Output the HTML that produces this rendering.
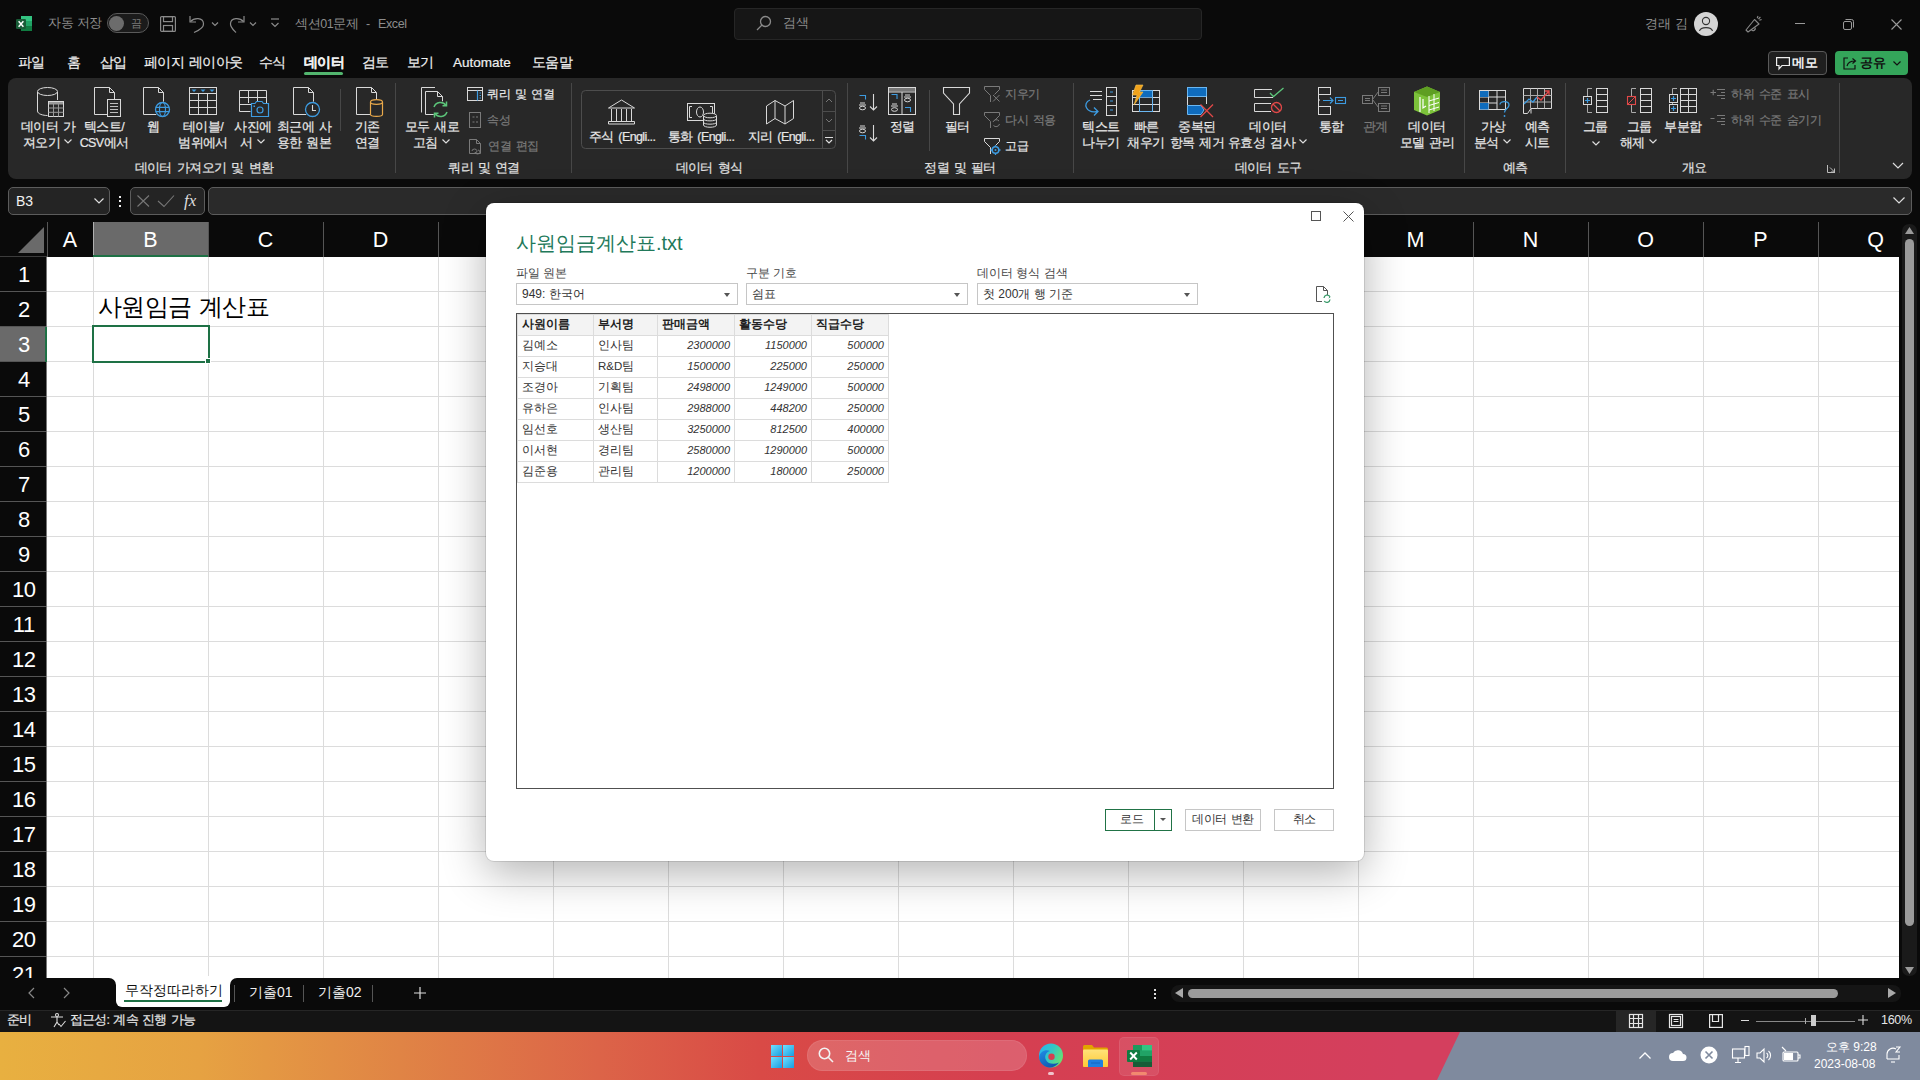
<!DOCTYPE html><html><head><meta charset="utf-8"><style>
*{margin:0;padding:0;box-sizing:border-box}
html,body{width:1920px;height:1080px;overflow:hidden;background:#0a0a0a;font-family:"Liberation Sans",sans-serif;color:#fff}
.a{position:absolute}
.t{position:absolute;white-space:nowrap;line-height:1}
svg{position:absolute;overflow:visible}
#ribbon{left:8px;top:78px;width:1904px;height:101px;background:#282828;border-radius:8px}
.rl{position:absolute;font-size:12px;letter-spacing:-0.6px;word-spacing:2px;-webkit-text-stroke:0.2px currentColor;color:#e8e8e8;text-align:center;line-height:16px;white-space:nowrap}
.gl{position:absolute;top:161px;font-size:12.5px;color:#e0e0e0;white-space:nowrap;line-height:14px}
.sep{position:absolute;width:1px;background:#474747}
.menu{position:absolute;top:55px;font-size:13.5px;letter-spacing:-0.7px;word-spacing:2px;-webkit-text-stroke:0.2px currentColor;color:#efefef;white-space:nowrap;line-height:16px}
.ch{position:absolute;top:222px;height:35px;font-size:21.5px;color:#fff;text-align:center;line-height:36px}
.rh{position:absolute;left:0;width:47px;height:35px;font-size:22px;letter-spacing:-0.5px;text-indent:0.5px;color:#fff;text-align:center;line-height:36px}
#dlg{left:486px;top:203px;width:878px;height:658px;background:#fff;border-radius:8px;box-shadow:0 12px 44px rgba(0,0,0,0.30),0 0 0 1px rgba(0,0,0,0.10)}
.dl{position:absolute;font-size:12px;color:#444;white-space:nowrap;line-height:14px}
.dd{position:absolute;top:80px;height:22px;border:1px solid #c6c6c6;background:#fff;font-size:12px;color:#333;line-height:20px;padding-left:5px;white-space:nowrap}
.dd:after{content:"";position:absolute;right:7px;top:9px;border-left:3.5px solid transparent;border-right:3.5px solid transparent;border-top:4px solid #555}
table.pv{position:absolute;left:30px;top:110px;border-collapse:collapse;font-size:11.5px;color:#333;table-layout:fixed}
table.pv td{border:1px solid #dcdcdc;height:21px;padding:0 4px 2px 4px;white-space:nowrap;line-height:17px;overflow:hidden}
table.pv tr.h td{background:#f3f3f3;font-weight:bold;color:#222;font-size:12px}
table.pv td.n{text-align:right;font-style:italic;font-size:11px}
.btn{position:absolute;top:606px;height:22px;border:1px solid #c6c6c6;font-size:12px;letter-spacing:-0.5px;word-spacing:1px;color:#333;text-align:center;line-height:18px;white-space:nowrap}
.sm{position:absolute;font-size:12px;letter-spacing:-0.5px;word-spacing:2px;-webkit-text-stroke:0.2px currentColor;white-space:nowrap;line-height:14px}
</style></head><body>
<div class="a" style="left:0;top:0;width:1920px;height:78px;background:#0a0a0a"></div>
<svg style="left:16px;top:15px" width="17" height="17" viewBox="0 0 17 17">
<rect x="5" y="1" width="11" height="15" rx="1" fill="#21a366"/>
<rect x="5" y="1" width="11" height="5" fill="#33c481"/>
<rect x="5" y="11" width="11" height="5" fill="#107c41"/>
<rect x="0" y="4" width="10" height="10" rx="1.2" fill="#185c37"/>
<path d="M2.6 6.3 L7.4 11.7 M7.4 6.3 L2.6 11.7" stroke="#fff" stroke-width="1.5"/>
</svg>
<div class="t" style="left:48px;top:17px;font-size:12.5px;letter-spacing:-0.3px;color:#8d8d8d">자동 저장</div>
<div class="a" style="left:107px;top:13px;width:42px;height:20px;border:1px solid #5a5a5a;border-radius:10px;background:#1b1b1b"></div>
<div class="a" style="left:108.5px;top:15.5px;width:15px;height:15px;border-radius:8px;background:#6c6c6c"></div>
<div class="t" style="left:131px;top:18px;font-size:11px;color:#7a7a7a">끔</div>
<svg style="left:160px;top:16px" width="16" height="16" viewBox="0 0 16 16" fill="none" stroke="#8a8a8a" stroke-width="1.2">
<rect x="0.6" y="0.6" width="14.8" height="14.8" rx="1"/><rect x="3.5" y="0.6" width="9" height="5"/><rect x="3.5" y="9.5" width="9" height="5.9"/></svg>
<svg style="left:189px;top:15px" width="32" height="18" viewBox="0 0 32 18" fill="none" stroke="#8a8a8a" stroke-width="1.2">
<path d="M1 1 V7 H7"/><path d="M1.5 6.5 C5 2.5 14 2 14.5 8.5 C15 12 12 14.5 5 17.5"/><path d="M23 7.5 l3 3 l3 -3"/></svg>
<svg style="left:229px;top:15px" width="32" height="18" viewBox="0 0 32 18" fill="none" stroke="#8a8a8a" stroke-width="1.2">
<path d="M15 1 V7 H9"/><path d="M14.5 6.5 C11 2.5 2 2 1.5 8.5 C1 12 4 14.5 7 17.5"/><path d="M21 7.5 l3 3 l3 -3"/></svg>
<svg style="left:270px;top:18px" width="10" height="12" viewBox="0 0 10 12" fill="none" stroke="#8a8a8a" stroke-width="1.2">
<path d="M1 1 H9"/><path d="M1.5 5 l3.5 3.5 l3.5 -3.5"/></svg>
<div class="t" style="left:295px;top:18px;font-size:12.5px;letter-spacing:-0.4px;color:#8d8d8d">섹션01문제</div><div class="t" style="left:366px;top:18px;font-size:12.5px;color:#8d8d8d">-</div><div class="t" style="left:378px;top:18px;font-size:12.5px;letter-spacing:-0.4px;color:#8d8d8d">Excel</div>
<div class="a" style="left:734px;top:8px;width:468px;height:32px;border:1px solid #262626;border-radius:4px;background:#161616"></div>
<svg style="left:756px;top:15px" width="16" height="16" viewBox="0 0 16 16" fill="none" stroke="#8a8a8a" stroke-width="1.3">
<circle cx="9.5" cy="6.5" r="5"/><path d="M6 10 L1 15"/></svg>
<div class="t" style="left:783px;top:16px;font-size:13px;color:#8d8d8d">검색</div>
<div class="t" style="left:1645px;top:17px;font-size:13px;letter-spacing:-0.4px;word-spacing:2px;color:#8d8d8d">경래 김</div>
<svg style="left:1694px;top:12px" width="24" height="24" viewBox="0 0 24 24"><circle cx="12" cy="12" r="12" fill="#d4d4d4"/>
<circle cx="12" cy="9" r="3.6" fill="none" stroke="#333" stroke-width="1.1"/><path d="M5.5 19 C6.5 14.5 17.5 14.5 18.5 19" fill="none" stroke="#333" stroke-width="1.1"/></svg>
<svg style="left:1745px;top:15px" width="18" height="18" viewBox="0 0 18 18" fill="none" stroke="#8a8a8a" stroke-width="1.1" stroke-linejoin="round">
<path d="M1 15 L9.5 4.5 L14 9 L3 17 Z"/><path d="M6.5 14.8 a2 2 0 0 0 3.3 -2.3"/><path d="M12.2 3.2 L13 1 M14.3 5.2 L16.6 4.4 M13.4 4 L15.4 2"/></svg>
<div class="a" style="left:1795px;top:23px;width:10px;height:1px;background:#9a9a9a"></div>
<svg style="left:1843px;top:19px" width="11" height="11" viewBox="0 0 11 11" fill="none" stroke="#9a9a9a" stroke-width="1">
<rect x="0.5" y="2.5" width="8" height="8" rx="1.5"/><path d="M2.5 0.5 H8.5 a2 2 0 0 1 2 2 V8.5"/></svg>
<svg style="left:1891px;top:19px" width="11" height="11" viewBox="0 0 11 11" fill="none" stroke="#9a9a9a" stroke-width="1.1">
<path d="M0.5 0.5 L10.5 10.5 M10.5 0.5 L0.5 10.5"/></svg>
<div class="menu" style="left:18px;font-weight:normal">파일</div>
<div class="menu" style="left:67px;font-weight:normal">홈</div>
<div class="menu" style="left:100px;font-weight:normal">삽입</div>
<div class="menu" style="left:144px;font-weight:normal">페이지 레이아웃</div>
<div class="menu" style="left:259px;font-weight:normal">수식</div>
<div class="menu" style="left:304px;font-weight:bold">데이터</div>
<div class="menu" style="left:362px;font-weight:normal">검토</div>
<div class="menu" style="left:407px;font-weight:normal">보기</div>
<div class="menu" style="left:453px;font-weight:normal;letter-spacing:0">Automate</div>
<div class="menu" style="left:532px;font-weight:normal">도움말</div>
<div class="a" style="left:304px;top:72px;width:39px;height:3px;border-radius:2px;background:#52b56e"></div>
<div class="a" style="left:1768px;top:51px;width:59px;height:24px;border:1px solid #5a5a5a;border-radius:4px;background:#1f1f1f"></div>
<svg style="left:1776px;top:57px" width="14" height="13" viewBox="0 0 14 13" fill="none" stroke="#eee" stroke-width="1.2">
<path d="M0.6 0.6 H13.4 V8.5 H6 L3 12 V8.5 H0.6 Z"/></svg>
<div class="t" style="left:1792px;top:56px;font-size:13px;color:#f0f0f0;font-weight:bold">메모</div>
<div class="a" style="left:1835px;top:51px;width:73px;height:24px;border-radius:4px;background:#34a55a"></div>
<svg style="left:1843px;top:57px" width="14" height="13" viewBox="0 0 14 13" fill="none" stroke="#111" stroke-width="1.2">
<path d="M5 1 H1 V12 H12 V8"/><path d="M4 9 C5 5 8 4 12 4 M9.5 1.5 L12.5 4 L9.5 6.5"/></svg>
<div class="t" style="left:1860px;top:56px;font-size:13px;color:#111;font-weight:bold">공유</div>
<svg style="left:1893px;top:61px" width="8" height="5" viewBox="0 0 8 5" fill="none" stroke="#111" stroke-width="1.2"><path d="M0.5 0.5 l3.5 3.5 l3.5 -3.5"/></svg>
<div id="ribbon" class="a"></div>
<div class="rl" style="left:-52px;top:119px;width:200px;color:#e8e8e8;font-size:12.5px;font-weight:normal">데이터 가</div>
<div class="rl" style="left:-52px;top:135px;width:200px;color:#e8e8e8;font-size:12.5px;font-weight:normal">져오기<span style="display:inline-block;width:10px;height:8px;position:relative;margin-left:3px"><svg style="left:1px;top:0" width="8" height="5" viewBox="0 0 8 5" fill="none" stroke="#ddd" stroke-width="1.2"><path d="M0.5 0.5 l3.5 3.5 l3.5 -3.5"/></svg></span></div>
<div class="rl" style="left:4px;top:119px;width:200px;color:#e8e8e8;font-size:12.5px;font-weight:normal">텍스트/</div>
<div class="rl" style="left:4px;top:135px;width:200px;color:#e8e8e8;font-size:12.5px;font-weight:normal">CSV에서</div>
<div class="rl" style="left:53px;top:119px;width:200px;color:#e8e8e8;font-size:12.5px;font-weight:normal">웹</div>
<div class="rl" style="left:103px;top:119px;width:200px;color:#e8e8e8;font-size:12.5px;font-weight:normal">테이블/</div>
<div class="rl" style="left:103px;top:135px;width:200px;color:#e8e8e8;font-size:12.5px;font-weight:normal">범위에서</div>
<div class="rl" style="left:153px;top:119px;width:200px;color:#e8e8e8;font-size:12.5px;font-weight:normal">사진에</div>
<div class="rl" style="left:153px;top:135px;width:200px;color:#e8e8e8;font-size:12.5px;font-weight:normal">서<span style="display:inline-block;width:10px;height:8px;position:relative;margin-left:3px"><svg style="left:1px;top:0" width="8" height="5" viewBox="0 0 8 5" fill="none" stroke="#ddd" stroke-width="1.2"><path d="M0.5 0.5 l3.5 3.5 l3.5 -3.5"/></svg></span></div>
<div class="rl" style="left:204px;top:119px;width:200px;color:#e8e8e8;font-size:12.5px;font-weight:normal">최근에 사</div>
<div class="rl" style="left:204px;top:135px;width:200px;color:#e8e8e8;font-size:12.5px;font-weight:normal">용한 원본</div>
<div class="rl" style="left:267px;top:119px;width:200px;color:#e8e8e8;font-size:12.5px;font-weight:normal">기존</div>
<div class="rl" style="left:267px;top:135px;width:200px;color:#e8e8e8;font-size:12.5px;font-weight:normal">연결</div>
<div class="rl" style="left:332px;top:119px;width:200px;color:#e8e8e8;font-size:12.5px;font-weight:normal">모두 새로</div>
<div class="rl" style="left:332px;top:135px;width:200px;color:#e8e8e8;font-size:12.5px;font-weight:normal">고침<span style="display:inline-block;width:10px;height:8px;position:relative;margin-left:3px"><svg style="left:1px;top:0" width="8" height="5" viewBox="0 0 8 5" fill="none" stroke="#ddd" stroke-width="1.2"><path d="M0.5 0.5 l3.5 3.5 l3.5 -3.5"/></svg></span></div>
<div class="sm" style="left:487px;top:87px;color:#e8e8e8">쿼리 및 연결</div>
<div class="sm" style="left:487px;top:113px;color:#7a7a7a">속성</div>
<div class="sm" style="left:488px;top:139px;color:#7a7a7a">연결 편집</div>
<div class="rl" style="left:522px;top:129px;width:200px;color:#e8e8e8;font-size:12.5px;font-weight:normal">주식 (Engli...</div>
<div class="rl" style="left:601px;top:129px;width:200px;color:#e8e8e8;font-size:12.5px;font-weight:normal">통화 (Engli...</div>
<div class="rl" style="left:681px;top:129px;width:200px;color:#e8e8e8;font-size:12.5px;font-weight:normal">지리 (Engli...</div>
<div class="rl" style="left:802px;top:119px;width:200px;color:#e8e8e8;font-size:12.5px;font-weight:normal">정렬</div>
<div class="rl" style="left:857px;top:119px;width:200px;color:#e8e8e8;font-size:12.5px;font-weight:normal">필터</div>
<div class="sm" style="left:1005px;top:87px;color:#7a7a7a">지우기</div>
<div class="sm" style="left:1005px;top:113px;color:#7a7a7a">다시 적용</div>
<div class="sm" style="left:1005px;top:139px;color:#e8e8e8">고급</div>
<div class="rl" style="left:1001px;top:119px;width:200px;color:#e8e8e8;font-size:12.5px;font-weight:normal">텍스트</div>
<div class="rl" style="left:1001px;top:135px;width:200px;color:#e8e8e8;font-size:12.5px;font-weight:normal">나누기</div>
<div class="rl" style="left:1046px;top:119px;width:200px;color:#e8e8e8;font-size:12.5px;font-weight:normal">빠른</div>
<div class="rl" style="left:1046px;top:135px;width:200px;color:#e8e8e8;font-size:12.5px;font-weight:normal">채우기</div>
<div class="rl" style="left:1097px;top:119px;width:200px;color:#e8e8e8;font-size:12.5px;font-weight:normal">중복된</div>
<div class="rl" style="left:1097px;top:135px;width:200px;color:#e8e8e8;font-size:12.5px;font-weight:normal">항목 제거</div>
<div class="rl" style="left:1168px;top:119px;width:200px;color:#e8e8e8;font-size:12.5px;font-weight:normal">데이터</div>
<div class="rl" style="left:1168px;top:135px;width:200px;color:#e8e8e8;font-size:12.5px;font-weight:normal">유효성 검사<span style="display:inline-block;width:10px;height:8px;position:relative;margin-left:3px"><svg style="left:1px;top:0" width="8" height="5" viewBox="0 0 8 5" fill="none" stroke="#ddd" stroke-width="1.2"><path d="M0.5 0.5 l3.5 3.5 l3.5 -3.5"/></svg></span></div>
<div class="rl" style="left:1231px;top:119px;width:200px;color:#e8e8e8;font-size:12.5px;font-weight:normal">통합</div>
<div class="rl" style="left:1275px;top:119px;width:200px;color:#7a7a7a;font-size:12.5px;font-weight:normal">관계</div>
<div class="rl" style="left:1327px;top:119px;width:200px;color:#e8e8e8;font-size:12.5px;font-weight:normal">데이터</div>
<div class="rl" style="left:1327px;top:135px;width:200px;color:#e8e8e8;font-size:12.5px;font-weight:normal">모델 관리</div>
<div class="rl" style="left:1393px;top:119px;width:200px;color:#e8e8e8;font-size:12.5px;font-weight:normal">가상</div>
<div class="rl" style="left:1393px;top:135px;width:200px;color:#e8e8e8;font-size:12.5px;font-weight:normal">분석<span style="display:inline-block;width:10px;height:8px;position:relative;margin-left:3px"><svg style="left:1px;top:0" width="8" height="5" viewBox="0 0 8 5" fill="none" stroke="#ddd" stroke-width="1.2"><path d="M0.5 0.5 l3.5 3.5 l3.5 -3.5"/></svg></span></div>
<div class="rl" style="left:1437px;top:119px;width:200px;color:#e8e8e8;font-size:12.5px;font-weight:normal">예측</div>
<div class="rl" style="left:1437px;top:135px;width:200px;color:#e8e8e8;font-size:12.5px;font-weight:normal">시트</div>
<div class="rl" style="left:1495px;top:119px;width:200px;color:#e8e8e8;font-size:12.5px;font-weight:normal">그룹</div>
<svg style="left:1592px;top:141px" width="8" height="5" viewBox="0 0 8 5" fill="none" stroke="#ddd" stroke-width="1.2"><path d="M0.5 0.5 l3.5 3.5 l3.5 -3.5"/></svg>
<div class="rl" style="left:1539px;top:119px;width:200px;color:#e8e8e8;font-size:12.5px;font-weight:normal">그룹</div>
<div class="rl" style="left:1539px;top:135px;width:200px;color:#e8e8e8;font-size:12.5px;font-weight:normal">해제<span style="display:inline-block;width:10px;height:8px;position:relative;margin-left:3px"><svg style="left:1px;top:0" width="8" height="5" viewBox="0 0 8 5" fill="none" stroke="#ddd" stroke-width="1.2"><path d="M0.5 0.5 l3.5 3.5 l3.5 -3.5"/></svg></span></div>
<div class="rl" style="left:1583px;top:119px;width:200px;color:#e8e8e8;font-size:12.5px;font-weight:normal">부분합</div>
<div class="sm" style="left:1731px;top:87px;color:#7a7a7a">하위 수준 표시</div>
<div class="sm" style="left:1731px;top:113px;color:#7a7a7a">하위 수준 숨기기</div>
<div class="rl" style="left:104px;top:160px;width:200px;color:#e0e0e0;font-size:12.5px;font-weight:normal">데이터 가져오기 및 변환</div>
<div class="rl" style="left:384px;top:160px;width:200px;color:#e0e0e0;font-size:12.5px;font-weight:normal">쿼리 및 연결</div>
<div class="rl" style="left:609px;top:160px;width:200px;color:#e0e0e0;font-size:12.5px;font-weight:normal">데이터 형식</div>
<div class="rl" style="left:860px;top:160px;width:200px;color:#e0e0e0;font-size:12.5px;font-weight:normal">정렬 및 필터</div>
<div class="rl" style="left:1168px;top:160px;width:200px;color:#e0e0e0;font-size:12.5px;font-weight:normal">데이터 도구</div>
<div class="rl" style="left:1415px;top:160px;width:200px;color:#e0e0e0;font-size:12.5px;font-weight:normal">예측</div>
<div class="rl" style="left:1594px;top:160px;width:200px;color:#e0e0e0;font-size:12.5px;font-weight:normal">개요</div>
<div class="sep" style="left:340px;top:89px;height:42px"></div>
<div class="sep" style="left:395px;top:83px;height:90px"></div>
<div class="sep" style="left:571px;top:83px;height:90px"></div>
<div class="sep" style="left:847px;top:83px;height:90px"></div>
<div class="sep" style="left:929px;top:90px;height:61px"></div>
<div class="sep" style="left:1073px;top:83px;height:90px"></div>
<div class="sep" style="left:1464px;top:83px;height:90px"></div>
<div class="sep" style="left:1565px;top:83px;height:90px"></div>
<div class="sep" style="left:1839px;top:83px;height:90px"></div>
<svg style="left:0;top:0" width="1920" height="180" viewBox="0 0 1920 180"><path d="M37.5 92 V111 C37.5 114 43 115.5 47.5 115.5" fill="none" stroke="#d9d9d9"/><ellipse cx="47.5" cy="91.5" rx="10" ry="4" fill="none" stroke="#d9d9d9"/><path d="M57.5 92 V100" fill="none" stroke="#d9d9d9"/><rect x="48.5" y="101.5" width="15" height="15" fill="#282828" stroke="#d9d9d9"/><rect x="49" y="102" width="14" height="2.5" fill="#9a9a9a"/><path d="M48.5 108 H63.5 M48.5 112.3 H63.5 M53.5 104 V116.5 M58.5 104 V116.5" stroke="#9a9a9a"/><path d="M94.5 87.5 H109.5 L114.5 92.5 V114.5 H94.5 Z" fill="none" stroke="#d9d9d9"/><path d="M109.5 87.5 V92.5 H114.5" fill="none" stroke="#d9d9d9"/><rect x="107.5" y="99.5" width="13" height="17" fill="#282828" stroke="#d9d9d9"/><path d="M110 103.5 H118 M110 106.5 H118 M110 109.5 H118 M110 112.5 H118" stroke="#bdbdbd"/><path d="M143.5 87.5 H158.5 L163.5 92.5 V114.5 H143.5 Z" fill="none" stroke="#d9d9d9"/><path d="M158.5 87.5 V92.5 H163.5" fill="none" stroke="#d9d9d9"/><circle cx="162.5" cy="109.5" r="8" fill="#282828"/><circle cx="162.5" cy="109.5" r="7" fill="none" stroke="#3d9be0" stroke-width="1.3"/><ellipse cx="162.5" cy="109.5" rx="3" ry="7" fill="none" stroke="#3d9be0" stroke-width="1.2"/><path d="M155.5 107.3 H169.5 M155.5 111.7 H169.5" stroke="#3d9be0" stroke-width="1.2"/><rect x="189.5" y="87.5" width="27" height="27" fill="none" stroke="#d9d9d9"/><path d="M189.5 93.5 H216.5 M189.5 100.5 H216.5 M189.5 107.5 H216.5 M198.5 93.5 V114.5 M207.5 93.5 V114.5" stroke="#d9d9d9"/><path d="M191.5 89.5 H196.5 L194 92 Z" fill="#3d9be0"/><path d="M200.5 89.5 H205.5 L203 92 Z" fill="#3d9be0"/><path d="M209.5 89.5 H214.5 L212 92 Z" fill="#3d9be0"/><path d="M250.5 111.5 H239.5 V90.5 H266.5 V103" fill="none" stroke="#d9d9d9"/><path d="M239.5 97.5 H266.5 M239.5 104.5 H251 M248.5 90.5 V103 M257.5 90.5 V103" stroke="#d9d9d9"/><path d="M251.5 103.5 H255 L256.5 101.5 H262 L263.5 103.5 H268.5 V116.5 H251.5 Z" fill="#282828" stroke="#3d9be0" stroke-width="1.2"/><circle cx="260" cy="110" r="3" fill="none" stroke="#3d9be0" stroke-width="1.2"/><rect x="253.5" y="105.5" width="1.5" height="1.5" fill="#3d9be0"/><path d="M293.5 87.5 H308.5 L313.5 92.5 V114.5 H293.5 Z" fill="none" stroke="#d9d9d9"/><path d="M308.5 87.5 V92.5 H313.5" fill="none" stroke="#d9d9d9"/><circle cx="312.5" cy="109.5" r="8" fill="#282828"/><circle cx="312.5" cy="109.5" r="7" fill="none" stroke="#3d9be0" stroke-width="1.3"/><path d="M312.5 105 V110.5 H316" fill="none" stroke="#d9d9d9" stroke-width="1.1"/><path d="M356.5 87.5 H371.5 L376.5 92.5 V114.5 H356.5 Z" fill="none" stroke="#d9d9d9"/><path d="M371.5 87.5 V92.5 H376.5" fill="none" stroke="#d9d9d9"/><path d="M370.5 102 V114.5 C370.5 117 382.5 117 382.5 114.5 V102" fill="#282828" stroke="#e9a94b" stroke-width="1.2"/><ellipse cx="376.5" cy="102" rx="6" ry="2.3" fill="#282828" stroke="#e9a94b" stroke-width="1.2"/><path d="M435 87.5 H421.5 V112.5" fill="none" stroke="#d9d9d9"/><path d="M425.5 91.5 H437.5 L442.5 96.5 V114.5 H425.5 Z" fill="none" stroke="#d9d9d9"/><path d="M437.5 91.5 V96.5 H442.5" fill="none" stroke="#d9d9d9"/><circle cx="440.5" cy="109.5" r="8.5" fill="#282828"/><path d="M434 107 A6.8 6.8 0 0 1 446 105.5 M447 112 A6.8 6.8 0 0 1 435 113.5" fill="none" stroke="#5cc57a" stroke-width="1.5"/><path d="M446.5 101.5 V105.8 H442.5 M434.5 117.5 V113.2 H438.5" fill="none" stroke="#5cc57a" stroke-width="1.5"/><rect x="467.5" y="87.5" width="15" height="13" fill="none" stroke="#d9d9d9"/><path d="M467.5 90.5 H482.5" stroke="#d9d9d9"/><path d="M477.5 90.5 V100.5" stroke="#3d9be0" stroke-width="1.2"/><path d="M479.5 93 H481 M479.5 95.5 H481 M479.5 98 H481" stroke="#3d9be0"/><rect x="469.5" y="112.5" width="11" height="15" fill="none" stroke="#7a7a7a"/><path d="M472.5 117 h2 M472.5 122 h2 M476 117 h2 M476 122 h2" stroke="#7a7a7a"/><path d="M469.5 139.5 H476.5 L480.5 143.5 V153.5 H469.5 Z" fill="none" stroke="#7a7a7a"/><path d="M476.5 139.5 V143.5 H480.5" fill="none" stroke="#7a7a7a"/><path d="M472 151 a2.5 2 0 1 1 3 2 M478 150 a2.5 2 0 1 1 -3 2" fill="none" stroke="#7a7a7a"/><rect x="581.5" y="90.5" width="254" height="58" rx="4" fill="none" stroke="#4d4d4d"/><path d="M822.5 90.5 V148.5 M822.5 111.5 H835.5 M822.5 130.5 H835.5" stroke="#4d4d4d"/><path d="M826 102 L829 99 L832 102" fill="none" stroke="#777"/><path d="M826 119 L829 122 L832 119" fill="none" stroke="#777"/><path d="M825 137.5 H833 M826 140 L829 143 L832 140" fill="none" stroke="#ddd" stroke-width="1.2"/><path d="M608.5 108 L621.5 100 L634.5 108 Z M608.5 121.5 H634.5 V124 H608.5 Z" fill="none" stroke="#d9d9d9"/><path d="M611.5 109 V121 M616.5 109 V121 M621.5 109 V121 M626.5 109 V121 M631.5 109 V121" stroke="#d9d9d9"/><rect x="687.5" y="103.5" width="27" height="17" fill="none" stroke="#d9d9d9"/><path d="M692 106.5 H689.5 V117.5 H692 M710 106.5 H712.5 V117.5 H710" fill="none" stroke="#d9d9d9"/><ellipse cx="700" cy="112" rx="3.5" ry="5" fill="none" stroke="#d9d9d9"/><path d="M703.5 116 V125 C703.5 128 716.5 128 716.5 125 V116" fill="#282828" stroke="#d9d9d9"/><ellipse cx="710" cy="115.5" rx="6.5" ry="2.3" fill="#282828" stroke="#d9d9d9"/><path d="M703.5 119 C703.5 121.5 716.5 121.5 716.5 119 M703.5 122.3 C703.5 124.8 716.5 124.8 716.5 122.3" fill="none" stroke="#d9d9d9"/><path d="M766.5 106 L775 100.5 L785 106 L793.5 100.5 V118.5 L785 124 L775 118.5 L766.5 124 Z M775 100.5 V118.5 M785 106 V124" fill="none" stroke="#d9d9d9"/><path d="M873.5 94 V110 M870 106.5 L873.5 110 L877 106.5" fill="none" stroke="#d9d9d9" stroke-width="1.1"/><path d="M859.5 95.5 H865.5 V99.5" fill="none" stroke="#3d9be0" stroke-width="1.1"/><path d="M860 103 H865 M859 105 H866" stroke="#d9d9d9"/><ellipse cx="862.5" cy="108" rx="3" ry="1.8" fill="none" stroke="#d9d9d9"/><path d="M873.5 125 V141 M870 137.5 L873.5 141 L877 137.5" fill="none" stroke="#d9d9d9" stroke-width="1.1"/><path d="M860 126 H865 M859 128 H866" stroke="#d9d9d9"/><ellipse cx="862.5" cy="131" rx="3" ry="1.8" fill="none" stroke="#d9d9d9"/><path d="M859.5 135.5 H865.5 V139.5" fill="none" stroke="#3d9be0" stroke-width="1.1"/><rect x="888.5" y="87.5" width="27" height="27" fill="none" stroke="#d9d9d9"/><rect x="889" y="88" width="26" height="3.5" fill="#777"/><path d="M888.5 92 H915.5 M902 92 V114.5" stroke="#d9d9d9"/><path d="M891.5 94.5 H897 V99" fill="none" stroke="#3d9be0" stroke-width="1.1"/><path d="M905 107.5 H910.5 V112" fill="none" stroke="#3d9be0" stroke-width="1.1"/><path d="M892 104 H897 M891 106 H898" stroke="#d9d9d9"/><ellipse cx="894.5" cy="109.5" rx="3" ry="1.8" fill="none" stroke="#d9d9d9"/><path d="M905 95 H910 M904 97 H911" stroke="#d9d9d9"/><ellipse cx="907.5" cy="100" rx="3" ry="1.8" fill="none" stroke="#d9d9d9"/><path d="M943.5 87.5 H969.5 V93 L959.5 104 V114.5 H953.5 V104 L943.5 93 Z" fill="none" stroke="#d9d9d9" stroke-width="1.1"/><path d="M990.5 102 V95.5 L984.5 89.5 V86.5 H999.5 V89.5 L994.5 94.5" fill="none" stroke="#7a7a7a" stroke-linejoin="miter"/><path d="M993 95 L999.5 101.5 M999.5 95 L993 101.5" stroke="#7a7a7a"/><path d="M990.5 128 V121.5 L984.5 115.5 V112.5 H999.5 V115.5 L994.5 120.5" fill="none" stroke="#7a7a7a" stroke-linejoin="miter"/><path d="M993 122 a3.5 3.5 0 0 1 6 -1 M999.5 124 a3.5 3.5 0 0 1 -6 1.5" fill="none" stroke="#7a7a7a"/><path d="M990.5 154 V147.5 L984.5 141.5 V138.5 H999.5 V141.5 L994.5 146.5" fill="none" stroke="#d9d9d9" stroke-linejoin="miter"/><circle cx="995.5" cy="150" r="3.3" fill="none" stroke="#3d9be0" stroke-width="1.6"/><circle cx="995.5" cy="150" r="1" fill="#3d9be0"/><path d="M995.5 145 V146.5 M995.5 153.5 V155 M990.5 150 H992 M999 150 H1000.5" stroke="#3d9be0" stroke-width="1.3"/><path d="M1090 91.5 H1102 M1090 95.5 H1102 M1093 99.5 H1102" stroke="#d9d9d9"/><rect x="1106.5" y="87.5" width="10" height="28" fill="none" stroke="#d9d9d9"/><path d="M1106.5 96.5 H1116.5 M1106.5 105.5 H1116.5" stroke="#d9d9d9"/><path d="M1110 92 H1113 M1110 101 H1113 M1110 110 H1113" stroke="#3d9be0"/><path d="M1090 100 C1082 103 1086 114 1098 111.5 M1094 107.5 L1098 111.5 L1094 115.5" fill="none" stroke="#3d9be0" stroke-width="1.3"/><rect x="1132.5" y="90.5" width="27" height="21" fill="none" stroke="#d9d9d9"/><path d="M1132.5 97.5 H1159.5 M1132.5 104.5 H1159.5 M1152.5 90.5 V111.5" stroke="#d9d9d9"/><path d="M1140 90.5 H1152.5 V97.5 H1140 Z" fill="#0f6cbd"/><rect x="1139.5" y="90.5" width="13" height="21" fill="none" stroke="#6ab7f2"/><path d="M1136 85 H1143 L1139.5 92 H1143 L1134 105 L1137 95 H1132.5 Z" fill="#f0a21c" stroke="#f7c550" stroke-width="0.6"/><rect x="1187.5" y="87.5" width="19" height="9" fill="#0f6cbd" stroke="#6ab7f2"/><path d="M1187.5 96.5 V105.5 M1206.5 96.5 V104" stroke="#d9d9d9"/><path d="M1187.5 105.5 H1201 L1204 110 L1201 114.5 H1187.5 Z" fill="#0f6cbd" stroke="#6ab7f2"/><path d="M1200.5 104.5 L1213 117 M1213 104.5 L1200.5 117" stroke="#e04848" stroke-width="1.3"/><path d="M1272 89.5 H1254.5 V97.5 H1273" fill="none" stroke="#d9d9d9"/><path d="M1271 103.5 H1254.5 V111.5 H1271" fill="none" stroke="#d9d9d9"/><path d="M1270 93 L1273.5 96.5 L1283.5 88" fill="none" stroke="#5cc57a" stroke-width="1.3"/><circle cx="1276.5" cy="107.5" r="5" fill="none" stroke="#e04848" stroke-width="1.3"/><path d="M1273 104 L1280 111" stroke="#e04848" stroke-width="1.3"/><rect x="1318.5" y="87.5" width="12" height="7" fill="none" stroke="#d9d9d9"/><rect x="1318.5" y="106.5" width="12" height="8" fill="none" stroke="#d9d9d9"/><path d="M1318.5 94.5 V106.5 M1318.5 100 H1320" stroke="#d9d9d9"/><path d="M1323 100.5 H1333 M1330 97.5 L1333 100.5 L1330 103.5" fill="none" stroke="#3d9be0" stroke-width="1.2"/><rect x="1335.5" y="97.5" width="10" height="6" fill="none" stroke="#3d9be0" stroke-width="1.1"/><path d="M1338 100.5 H1343" stroke="#3d9be0"/><rect x="1362.5" y="95.5" width="10" height="8" fill="none" stroke="#7a7a7a"/><rect x="1378.5" y="87.5" width="11" height="8" fill="none" stroke="#7a7a7a"/><rect x="1378.5" y="103.5" width="11" height="8" fill="none" stroke="#7a7a7a"/><path d="M1372.5 99.5 L1378.5 91.5 M1372.5 99.5 L1378.5 107.5 M1365 98.5 H1370 M1365 100.5 H1370 M1381 90 H1387 M1381 92.5 H1387 M1381 106 H1387 M1381 108.5 H1387" stroke="#7a7a7a"/><path d="M1414 92 L1427 86.5 L1440 92 V110 L1427 115.5 L1414 110 Z" fill="#7cc23a"/><path d="M1414 92 L1427 86.5 L1440 92 L1427 97 Z" fill="#5e9e22"/><path d="M1420 97 V112 M1423 99 L1423 108 L1426 106" fill="none" stroke="#fff" stroke-width="1.2"/><path d="M1429 96 V113 M1434 94 V111 M1429 101 L1439 98 M1429 105.5 L1439 102.5 M1429 110 L1439 107" stroke="#fff" stroke-width="1"/><rect x="1479.5" y="90.5" width="26" height="19" fill="none" stroke="#d9d9d9"/><path d="M1479.5 97 H1505.5 M1479.5 103 H1497 M1488.5 90.5 V109.5 M1497 90.5 V109.5" stroke="#d9d9d9"/><rect x="1480" y="91" width="8.5" height="6" fill="#0f6cbd"/><rect x="1480" y="103" width="8.5" height="6.5" fill="#0f6cbd"/><path d="M1500 104.5 C1500 100.5 1509 100.5 1509 105 C1509 108.5 1504.5 108.5 1504.5 112.5" fill="none" stroke="#3d9be0" stroke-width="1.3"/><circle cx="1504.5" cy="116" r="0.9" fill="#3d9be0"/><path d="M1527.5 113.5 H1523.5 V88.5 H1551.5 V108.5 H1531 Z M1531 108.5 V113.5" fill="none" stroke="#d9d9d9"/><path d="M1523.5 95.5 H1551.5 M1523.5 102 H1551.5 M1530.5 88.5 V108.5 M1537.5 88.5 V108.5 M1544.5 88.5 V108.5" stroke="#aaa"/><path d="M1524 104 L1529 99 L1533 102 L1537 97" fill="none" stroke="#3d9be0" stroke-width="1.3"/><path d="M1537 97 L1541 100 L1549 91 M1545 91 H1549 V95" fill="none" stroke="#e04848" stroke-width="1.3"/><path d="M1592 88.5 H1587.5 V112.5 H1592" fill="none" stroke="#aaa"/><rect x="1596.5" y="88.5" width="11" height="24" fill="none" stroke="#d9d9d9"/><path d="M1596.5 94.5 H1607.5 M1596.5 100.5 H1607.5 M1596.5 106.5 H1607.5" stroke="#d9d9d9"/><rect x="1583.5" y="96.5" width="8" height="8" fill="#282828" stroke="#d9d9d9"/><path d="M1587.5 98 V103 M1585 100.5 H1590" stroke="#3d9be0" stroke-width="1.2"/><path d="M1636 88.5 H1631.5 V112.5 H1636" fill="none" stroke="#aaa"/><rect x="1640.5" y="88.5" width="11" height="24" fill="none" stroke="#d9d9d9"/><path d="M1640.5 94.5 H1651.5 M1640.5 100.5 H1651.5 M1640.5 106.5 H1651.5" stroke="#d9d9d9"/><rect x="1627.5" y="96.5" width="8" height="8" fill="#282828" stroke="#e04848" stroke-width="1.1"/><path d="M1628 104 L1635 97" stroke="#e04848"/><path d="M1677 88.5 H1672.5 V112.5 H1677" fill="none" stroke="#aaa"/><rect x="1680.5" y="88.5" width="16" height="24" fill="none" stroke="#d9d9d9"/><path d="M1680.5 94.5 H1696.5 M1680.5 100.5 H1696.5 M1680.5 106.5 H1696.5" stroke="#d9d9d9"/><path d="M1688.5 88.5 V112.5" stroke="#d9d9d9"/><rect x="1669.5" y="94.5" width="8" height="8" fill="#282828" stroke="#d9d9d9"/><path d="M1673.5 96 V101 M1671 98.5 H1676" stroke="#3d9be0" stroke-width="1.2"/><rect x="1669.5" y="104.5" width="8" height="8" fill="#282828" stroke="#d9d9d9"/><path d="M1673.5 106 V111 M1671 108.5 H1676" stroke="#3d9be0" stroke-width="1.2"/><path d="M1710.5 92.5 H1716 M1713.2 89.8 V95.2 M1717 89.5 H1725 M1721 92.5 H1725 M1717 95.5 H1725 M1721 98.5 H1725" stroke="#7a7a7a" stroke-width="1.1"/><path d="M1710.5 118.5 H1714.5 M1717 115.5 H1725 M1721 118.5 H1725 M1717 121.5 H1725 M1721 124.5 H1725" stroke="#7a7a7a" stroke-width="1.1"/><path d="M1827.5 165 V172.5 H1835 M1830 167.5 L1834.5 172 M1831 172 H1834.5 V168.5" fill="none" stroke="#bbb"/><path d="M1893 163 L1898 168 L1903 163" fill="none" stroke="#ddd" stroke-width="1.2"/></svg>
<div class="a" style="left:8px;top:187px;width:102px;height:28px;border:1px solid #5c5c5c;border-radius:5px;background:#242424"></div>
<div class="t" style="left:16px;top:194px;font-size:14px;color:#f2f2f2">B3</div>
<svg style="left:94px;top:198px" width="10" height="6" viewBox="0 0 10 6" fill="none" stroke="#ddd" stroke-width="1.2"><path d="M0.5 0.5 l4.5 4.5 l4.5 -4.5"/></svg>
<div class="a" style="left:119px;top:196px;width:2px;height:2px;background:#eee"></div><div class="a" style="left:119px;top:200px;width:2px;height:2px;background:#eee"></div><div class="a" style="left:119px;top:205px;width:2px;height:2px;background:#eee"></div>
<div class="a" style="left:130px;top:187px;width:75px;height:28px;border:1px solid #5c5c5c;border-radius:5px;background:#242424"></div>
<svg style="left:137px;top:195px" width="52" height="12" viewBox="0 0 52 12" fill="none" stroke="#777" stroke-width="1.1">
<path d="M0.5 0.5 L12 11.5 M12 0.5 L0.5 11.5"/><path d="M21 6 L27 11.5 L37 0.5"/></svg>
<div class="t" style="left:184px;top:192px;font-size:17px;color:#ddd;font-style:italic;font-family:'Liberation Serif',serif">fx</div>
<div class="a" style="left:208px;top:187px;width:1704px;height:28px;border:1px solid #5c5c5c;border-radius:5px;background:#2a2a2a"></div>
<svg style="left:1893px;top:197px" width="12" height="7" viewBox="0 0 12 7" fill="none" stroke="#ddd" stroke-width="1.2"><path d="M0.5 0.5 l5.5 5.5 l5.5 -5.5"/></svg>
<svg style="left:17px;top:226px" width="28" height="28" viewBox="0 0 28 28"><path d="M27 1 V27 H1 Z" fill="#6a6a6a"/></svg>
<div class="a" style="left:93px;top:222px;width:115px;height:35px;background:#6a6a6a;border-left:1px solid #b0b0b0"></div>
<div class="a" style="left:93px;top:255px;width:115px;height:2px;background:#1e7145"></div>
<div class="a" style="left:47px;top:222px;width:1px;height:35px;background:#555"></div>

<div class="ch" style="left:47px;width:46px">A</div>
<div class="a" style="left:208px;top:222px;width:1px;height:35px;background:#555"></div>
<div class="ch" style="left:93px;width:115px">B</div>
<div class="a" style="left:323px;top:222px;width:1px;height:35px;background:#555"></div>
<div class="ch" style="left:208px;width:115px">C</div>
<div class="a" style="left:438px;top:222px;width:1px;height:35px;background:#555"></div>
<div class="ch" style="left:323px;width:115px">D</div>
<div class="a" style="left:553px;top:222px;width:1px;height:35px;background:#555"></div>
<div class="ch" style="left:438px;width:115px">E</div>
<div class="a" style="left:668px;top:222px;width:1px;height:35px;background:#555"></div>
<div class="ch" style="left:553px;width:115px">F</div>
<div class="a" style="left:783px;top:222px;width:1px;height:35px;background:#555"></div>
<div class="ch" style="left:668px;width:115px">G</div>
<div class="a" style="left:898px;top:222px;width:1px;height:35px;background:#555"></div>
<div class="ch" style="left:783px;width:115px">H</div>
<div class="a" style="left:1013px;top:222px;width:1px;height:35px;background:#555"></div>
<div class="ch" style="left:898px;width:115px">I</div>
<div class="a" style="left:1128px;top:222px;width:1px;height:35px;background:#555"></div>
<div class="ch" style="left:1013px;width:115px">J</div>
<div class="a" style="left:1243px;top:222px;width:1px;height:35px;background:#555"></div>
<div class="ch" style="left:1128px;width:115px">K</div>
<div class="a" style="left:1358px;top:222px;width:1px;height:35px;background:#555"></div>
<div class="ch" style="left:1243px;width:115px">L</div>
<div class="a" style="left:1473px;top:222px;width:1px;height:35px;background:#555"></div>
<div class="ch" style="left:1358px;width:115px">M</div>
<div class="a" style="left:1588px;top:222px;width:1px;height:35px;background:#555"></div>
<div class="ch" style="left:1473px;width:115px">N</div>
<div class="a" style="left:1703px;top:222px;width:1px;height:35px;background:#555"></div>
<div class="ch" style="left:1588px;width:115px">O</div>
<div class="a" style="left:1818px;top:222px;width:1px;height:35px;background:#555"></div>
<div class="ch" style="left:1703px;width:115px">P</div>
<div class="a" style="left:1933px;top:222px;width:1px;height:35px;background:#555"></div>
<div class="ch" style="left:1818px;width:115px">Q</div>
<div class="a" style="left:0;top:256px;width:47px;height:1px;background:#3c3c3c"></div>
<div class="a" style="left:0;top:327px;width:47px;height:35px;background:#6a6a6a"></div>
<div class="a" style="left:45px;top:327px;width:2px;height:35px;background:#1e7145"></div>
<div class="rh" style="top:257px">1</div>
<div class="a" style="left:0;top:291px;width:47px;height:1px;background:#555"></div>
<div class="rh" style="top:292px">2</div>
<div class="a" style="left:0;top:326px;width:47px;height:1px;background:#555"></div>
<div class="rh" style="top:327px">3</div>
<div class="a" style="left:0;top:361px;width:47px;height:1px;background:#555"></div>
<div class="rh" style="top:362px">4</div>
<div class="a" style="left:0;top:396px;width:47px;height:1px;background:#555"></div>
<div class="rh" style="top:397px">5</div>
<div class="a" style="left:0;top:431px;width:47px;height:1px;background:#555"></div>
<div class="rh" style="top:432px">6</div>
<div class="a" style="left:0;top:466px;width:47px;height:1px;background:#555"></div>
<div class="rh" style="top:467px">7</div>
<div class="a" style="left:0;top:501px;width:47px;height:1px;background:#555"></div>
<div class="rh" style="top:502px">8</div>
<div class="a" style="left:0;top:536px;width:47px;height:1px;background:#555"></div>
<div class="rh" style="top:537px">9</div>
<div class="a" style="left:0;top:571px;width:47px;height:1px;background:#555"></div>
<div class="rh" style="top:572px">10</div>
<div class="a" style="left:0;top:606px;width:47px;height:1px;background:#555"></div>
<div class="rh" style="top:607px">11</div>
<div class="a" style="left:0;top:641px;width:47px;height:1px;background:#555"></div>
<div class="rh" style="top:642px">12</div>
<div class="a" style="left:0;top:676px;width:47px;height:1px;background:#555"></div>
<div class="rh" style="top:677px">13</div>
<div class="a" style="left:0;top:711px;width:47px;height:1px;background:#555"></div>
<div class="rh" style="top:712px">14</div>
<div class="a" style="left:0;top:746px;width:47px;height:1px;background:#555"></div>
<div class="rh" style="top:747px">15</div>
<div class="a" style="left:0;top:781px;width:47px;height:1px;background:#555"></div>
<div class="rh" style="top:782px">16</div>
<div class="a" style="left:0;top:816px;width:47px;height:1px;background:#555"></div>
<div class="rh" style="top:817px">17</div>
<div class="a" style="left:0;top:851px;width:47px;height:1px;background:#555"></div>
<div class="rh" style="top:852px">18</div>
<div class="a" style="left:0;top:886px;width:47px;height:1px;background:#555"></div>
<div class="rh" style="top:887px">19</div>
<div class="a" style="left:0;top:921px;width:47px;height:1px;background:#555"></div>
<div class="rh" style="top:922px">20</div>
<div class="a" style="left:0;top:956px;width:47px;height:1px;background:#555"></div>
<div class="rh" style="top:957px">21</div>
<div class="a" style="left:0;top:991px;width:47px;height:1px;background:#555"></div>
<div class="a" style="left:46px;top:257px;width:1px;height:721px;background:#777"></div>
<div class="a" style="left:45px;top:327px;width:2px;height:35px;background:#1e7145"></div>
<div class="a" style="left:47px;top:257px;width:1852px;height:721px;background-color:#fff;background-image:linear-gradient(90deg,transparent 114px,#dcdcdc 114px),linear-gradient(180deg,transparent 34px,#dcdcdc 34px);background-size:115px 100%,100% 35px;background-position:47px 0,0 0;background-repeat:repeat-x,repeat-y"></div>
<div class="a" style="left:93px;top:257px;width:1px;height:721px;background:#dadada"></div>
<div class="t" style="left:98px;top:296px;font-size:23.5px;letter-spacing:-0.7px;word-spacing:2px;color:#000">사원임금 계산표</div>
<div class="a" style="left:92px;top:325px;width:118px;height:38px;border:2px solid #1e7145"></div>
<div class="a" style="left:205px;top:358px;width:6px;height:6px;background:#1e7145;border:1px solid #fff"></div>
<div class="a" style="left:1899px;top:222px;width:21px;height:756px;background:#0a0a0a"></div>
<div class="a" style="left:1902px;top:224px;width:15px;height:752px;border-radius:7px;background:#1a1a1a"></div>
<svg style="left:1905px;top:227px" width="9" height="7" viewBox="0 0 9 7"><path d="M4.5 0 L9 7 H0 Z" fill="#9a9a9a"/></svg>
<svg style="left:1905px;top:967px" width="9" height="7" viewBox="0 0 9 7"><path d="M4.5 7 L9 0 H0 Z" fill="#9a9a9a"/></svg>
<div class="a" style="left:1905px;top:239px;width:9px;height:687px;border-radius:5px;background:#9b9b9b"></div>
<div class="a" style="left:0;top:978px;width:1920px;height:32px;background:#0a0a0a"></div>
<svg style="left:27px;top:987px" width="44" height="12" viewBox="0 0 44 12" fill="none" stroke="#888" stroke-width="1.2">
<path d="M7 1 L2 6 L7 11"/><path d="M37 1 L42 6 L37 11"/></svg>
<div class="a" style="left:104px;top:978px;width:138px;height:8px;background:#fff"></div>
<div class="a" style="left:100px;top:978px;width:16px;height:12px;background:#0a0a0a;border-top-right-radius:7px"></div>
<div class="a" style="left:230px;top:978px;width:16px;height:12px;background:#0a0a0a;border-top-left-radius:7px"></div>
<div class="a" style="left:116px;top:976px;width:114px;height:31px;background:#fff;border-radius:0 0 6px 6px"></div>
<div class="t" style="left:125px;top:983px;font-size:14px;color:#111">무작정따라하기</div>
<div class="a" style="left:124px;top:1000px;width:98px;height:2px;background:#1e7145"></div>
<div class="a" style="left:234px;top:985px;width:1px;height:17px;background:#555"></div>
<div class="a" style="left:303px;top:985px;width:1px;height:17px;background:#555"></div>
<div class="a" style="left:372px;top:985px;width:1px;height:17px;background:#555"></div>
<div class="t" style="left:249px;top:985px;font-size:14px;color:#f0f0f0">기출01</div>
<div class="t" style="left:318px;top:985px;font-size:14px;color:#f0f0f0">기출02</div>
<svg style="left:414px;top:987px" width="12" height="12" viewBox="0 0 12 12" stroke="#ddd" stroke-width="1.2"><path d="M6 0 V12 M0 6 H12"/></svg>
<div class="a" style="left:1154px;top:989px;width:2px;height:2px;background:#ddd"></div><div class="a" style="left:1154px;top:993px;width:2px;height:2px;background:#ddd"></div><div class="a" style="left:1154px;top:997px;width:2px;height:2px;background:#ddd"></div>
<div class="a" style="left:1171px;top:985px;width:730px;height:17px;border-radius:8px;background:#151515"></div>
<svg style="left:1175px;top:988px" width="8" height="10" viewBox="0 0 8 10"><path d="M0 5 L8 0 V10 Z" fill="#aaa"/></svg>
<svg style="left:1888px;top:988px" width="8" height="10" viewBox="0 0 8 10"><path d="M8 5 L0 0 V10 Z" fill="#aaa"/></svg>
<div class="a" style="left:1188px;top:989px;width:650px;height:9px;border-radius:5px;background:#9b9b9b"></div>
<div class="a" style="left:0;top:1010px;width:1920px;height:22px;background:#141414;border-top:1px solid #262626"></div>
<div class="t" style="left:7px;top:1014px;font-size:12.5px;letter-spacing:-0.6px;-webkit-text-stroke:0.2px currentColor;color:#e6e6e6">준비</div>
<svg style="left:50px;top:1013px" width="16" height="15" viewBox="0 0 16 15" fill="none" stroke="#ddd" stroke-width="1.1">
<circle cx="7" cy="2" r="1.5"/><path d="M1 4 H13 M7 4 V9 L4 14 M7 9 L9 12"/><path d="M9 11 L11 13.5 L15.5 8"/></svg>
<div class="t" style="left:70px;top:1014px;font-size:12.5px;letter-spacing:-0.8px;word-spacing:1.5px;-webkit-text-stroke:0.2px currentColor;color:#e6e6e6">접근성: 계속 진행 가능</div>
<div class="a" style="left:1616px;top:1011px;width:40px;height:21px;background:#262626"></div>
<svg style="left:1629px;top:1014px" width="14" height="14" viewBox="0 0 14 14" fill="none" stroke="#e6e6e6" stroke-width="1.2">
<rect x="0.5" y="0.5" width="13" height="13"/><path d="M4.5 0.5 V13.5 M9.5 0.5 V13.5 M0.5 4.5 H13.5 M0.5 9.5 H13.5"/></svg>
<svg style="left:1669px;top:1014px" width="14" height="14" viewBox="0 0 14 14" fill="none" stroke="#e6e6e6" stroke-width="1.2">
<rect x="0.5" y="0.5" width="13" height="13"/><rect x="2.5" y="2.5" width="9" height="9"/><path d="M4.5 5.5 H9.5 M4.5 7.5 H9.5"/></svg>
<svg style="left:1709px;top:1014px" width="14" height="14" viewBox="0 0 14 14" fill="none" stroke="#e6e6e6" stroke-width="1.2">
<rect x="0.6" y="0.6" width="12.8" height="12.8"/><path d="M3.5 0.5 V7.5 H9.5 V0.5"/></svg>
<div class="a" style="left:1741px;top:1020px;width:8px;height:1px;background:#ddd"></div>
<div class="a" style="left:1756px;top:1021px;width:99px;height:1px;background:#888"></div>
<div class="a" style="left:1805px;top:1018px;width:1px;height:6px;background:#aaa"></div>
<div class="a" style="left:1811px;top:1015px;width:5px;height:11px;background:#ccc"></div>
<svg style="left:1858px;top:1015px" width="10" height="10" viewBox="0 0 10 10" stroke="#ddd" stroke-width="1.1"><path d="M5 0 V10 M0 5 H10"/></svg>
<div class="t" style="left:1881px;top:1014px;font-size:12.5px;letter-spacing:-0.3px;color:#e6e6e6">160%</div>
<div class="a" style="left:0;top:1032px;width:1920px;height:48px;background:linear-gradient(90deg,#e8b040 0%,#e6a242 10.4%,#e08445 20.8%,#dc6448 31.2%,#d94a46 39.6%,#d53f50 52%,#d43f5e 73%)"></div>
<div class="a" style="left:0;top:1032px;width:1920px;height:48px;background:#7f8a9e;clip-path:polygon(1460px 0,1920px 0,1920px 48px,1437px 48px)"></div>
<svg style="left:771px;top:1045px" width="23" height="23" viewBox="0 0 23 23">
<defs><linearGradient id="wg" x1="0" y1="0" x2="1" y2="1"><stop offset="0" stop-color="#6fe0ff"/><stop offset="1" stop-color="#1a9de0"/></linearGradient></defs>
<rect x="0" y="0" width="11" height="11" fill="url(#wg)"/><rect x="12" y="0" width="11" height="11" fill="url(#wg)"/>
<rect x="0" y="12" width="11" height="11" fill="url(#wg)"/><rect x="12" y="12" width="11" height="11" fill="url(#wg)"/></svg>
<div class="a" style="left:807px;top:1040px;width:220px;height:31px;border-radius:16px;background:rgba(255,255,255,0.17);border:1px solid rgba(255,255,255,0.08)"></div>
<svg style="left:818px;top:1047px" width="16" height="16" viewBox="0 0 16 16" fill="none" stroke="#f2f2f2" stroke-width="1.6">
<circle cx="6.5" cy="6.5" r="5.2"/><path d="M10.5 10.5 L15 15"/></svg>
<div class="t" style="left:845px;top:1049px;font-size:13px;color:#f5f5f5">검색</div>
<svg style="left:1038px;top:1043px" width="26" height="26" viewBox="0 0 26 26">
<defs><linearGradient id="eg" x1="0" y1="0.2" x2="1" y2="0.7"><stop offset="0" stop-color="#27b4f0"/><stop offset="0.5" stop-color="#35c9c0"/><stop offset="1" stop-color="#6de36a"/></linearGradient>
<linearGradient id="eb" x1="0" y1="0" x2="0.6" y2="1"><stop offset="0" stop-color="#1d8fe6"/><stop offset="1" stop-color="#1456b0"/></linearGradient></defs>
<circle cx="13" cy="12.5" r="12" fill="url(#eg)"/>
<path d="M1.2 14 C2 8 8 6 12 8 C8 9 6 13 8 17 C10 21 16 22 21 19.5 C18 23.5 14 25 11 24.5 C5 23.5 1 19 1.2 14Z" fill="url(#eb)"/>
<circle cx="13.5" cy="13.8" r="3.2" fill="#d53f50"/>
</svg>
<div class="a" style="left:1048px;top:1072px;width:6px;height:3px;border-radius:2px;background:#f0c4cc"></div>
<svg style="left:1083px;top:1045px" width="25" height="22" viewBox="0 0 25 22">
<path d="M0 1.5 a1.5 1.5 0 0 1 1.5 -1.5 H9 L11 2.5 H23.5 a1.5 1.5 0 0 1 1.5 1.5 V20.5 a1.5 1.5 0 0 1 -1.5 1.5 H1.5 a1.5 1.5 0 0 1 -1.5 -1.5Z" fill="#e2a400"/>
<defs><linearGradient id="fy" x1="0" y1="0" x2="0" y2="1"><stop offset="0" stop-color="#ffe27a"/><stop offset="1" stop-color="#ffc935"/></linearGradient></defs>
<rect x="0" y="4.5" width="25" height="17.5" rx="1" fill="url(#fy)"/><path d="M5 22 V16 a1.5 1.5 0 0 1 1.5 -1.5 H18.5 a1.5 1.5 0 0 1 1.5 1.5 V22Z" fill="#1f7fe0"/>
<path d="M8 18 H17" stroke="#1560b8" stroke-width="0.8"/></svg>
<div class="a" style="left:1119px;top:1037px;width:40px;height:39px;border-radius:5px;background:rgba(255,255,255,0.09);border:1px solid rgba(255,255,255,0.07)"></div>
<svg style="left:1127px;top:1045px" width="25" height="22" viewBox="0 0 25 22">
<rect x="6" y="0" width="19" height="22" rx="1.5" fill="#21a366"/><rect x="6" y="0" width="19" height="5.5" fill="#1e9a5e"/><rect x="15" y="0" width="10" height="5.5" fill="#33c481"/>
<rect x="6" y="11" width="19" height="5.5" fill="#107c41"/><rect x="6" y="16.5" width="19" height="5.5" fill="#185c37"/>
<rect x="0" y="5" width="13" height="12" rx="1" fill="#107c41"/><path d="M3.2 7.5 L9.8 14.5 M9.8 7.5 L3.2 14.5" stroke="#fff" stroke-width="1.9"/></svg>
<div class="a" style="left:1131px;top:1072px;width:16px;height:3px;border-radius:2px;background:#f2896f"></div>
<svg style="left:1639px;top:1052px" width="12" height="7" viewBox="0 0 12 7" fill="none" stroke="#fff" stroke-width="1.3"><path d="M0.5 6.5 L6 1 L11.5 6.5"/></svg>
<svg style="left:1669px;top:1049px" width="18" height="12" viewBox="0 0 18 12"><path d="M4 12 a4 4 0 0 1 0 -8 a5.5 5.5 0 0 1 10 1 a3.5 3.5 0 0 1 0 7 Z" fill="#fff"/></svg>
<svg style="left:1700px;top:1046px" width="18" height="18" viewBox="0 0 18 18"><circle cx="9" cy="9" r="8.5" fill="#fff"/><path d="M5.5 5.5 L12.5 12.5 M12.5 5.5 L5.5 12.5" stroke="#7f8a9e" stroke-width="1.6"/></svg>
<svg style="left:1732px;top:1046px" width="18" height="18" viewBox="0 0 18 18" fill="none" stroke="#fff" stroke-width="1.1">
<rect x="0.5" y="3" width="12" height="9"/><path d="M6 12 V16 M3 16.5 H9"/><rect x="13" y="0.5" width="4" height="9"/></svg>
<svg style="left:1756px;top:1048px" width="16" height="15" viewBox="0 0 16 15" fill="none" stroke="#fff" stroke-width="1.1">
<path d="M1 5 H4 L8 1 V14 L4 10 H1 Z"/><path d="M10.5 5 a3 3 0 0 1 0 5 M12.5 3 a6 6 0 0 1 0 9"/></svg>
<svg style="left:1781px;top:1046px" width="20" height="18" viewBox="0 0 20 18" fill="none" stroke="#fff" stroke-width="1.1">
<rect x="2" y="6" width="15" height="9" rx="1"/><path d="M17 9 H19 V12 H17"/><path d="M1 1 L5 5"/><rect x="3.5" y="7.5" width="8" height="6" fill="#fff"/></svg>
<div class="t" style="left:1826px;top:1041px;font-size:12px;color:#fff">오후 9:28</div>
<div class="t" style="left:1814px;top:1058px;font-size:12px;color:#fff">2023-08-08</div>
<svg style="left:1885px;top:1046px" width="16" height="18" viewBox="0 0 16 18" fill="none" stroke="#fff" stroke-width="1.1">
<path d="M2 13 V8 a6 6 0 0 1 9 -5 M2 13 H14 V9"/><path d="M6 16 H10"/><path d="M11 1 H15 L11 6 H15"/></svg>
<div id="dlg" class="a">
<div class="t" style="left:30px;top:30px;font-size:20px;color:#22795a">사원임금계산표.txt</div>
<svg style="left:825px;top:8px" width="10" height="10" viewBox="0 0 10 10" fill="none" stroke="#555" stroke-width="1"><rect x="0.5" y="0.5" width="9" height="9"/></svg>
<svg style="left:857px;top:8px" width="11" height="11" viewBox="0 0 11 11" fill="none" stroke="#555" stroke-width="1"><path d="M0.5 0.5 L10.5 10.5 M10.5 0.5 L0.5 10.5"/></svg>
<div class="dl" style="left:30px;top:63px">파일 원본</div>
<div class="dl" style="left:260px;top:63px">구분 기호</div>
<div class="dl" style="left:491px;top:63px">데이터 형식 검색</div>
<div class="dd" style="left:30px;width:222px">949: 한국어</div>
<div class="dd" style="left:260px;width:222px">쉼표</div>
<div class="dd" style="left:491px;width:221px">첫 200개 행 기준</div>
<svg style="left:830px;top:83px" width="15" height="17" viewBox="0 0 15 17" fill="none">
<path d="M0.5 0.5 H7.5 L11.5 4.5 V9 M0.5 0.5 V15.5 H6" stroke="#555" stroke-width="1"/><path d="M7.5 0.5 V4.5 H11.5" stroke="#555" stroke-width="1"/>
<path d="M8 12 a3.2 3.2 0 0 1 5.8 -1.5 M14 13.5 a3.2 3.2 0 0 1 -5.8 1.5" stroke="#3a9a6a" stroke-width="1.3"/>
<path d="M12.5 9.5 L14.2 10.8 L12.8 12" stroke="#3a9a6a" stroke-width="1"/></svg>
<div class="a" style="left:30px;top:110px;width:818px;height:476px;border:1px solid #505050"></div>
<table class="pv" style="left:31px;top:111px">
<colgroup><col style="width:76px"><col style="width:64px"><col style="width:77px"><col style="width:77px"><col style="width:77px"></colgroup>
<tr class="h"><td>사원이름</td><td>부서명</td><td>판매금액</td><td>활동수당</td><td>직급수당</td></tr>
<tr><td>김예소</td><td>인사팀</td><td class="n">2300000</td><td class="n">1150000</td><td class="n">500000</td></tr>
<tr><td>지승대</td><td>R&amp;D팀</td><td class="n">1500000</td><td class="n">225000</td><td class="n">250000</td></tr>
<tr><td>조경아</td><td>기획팀</td><td class="n">2498000</td><td class="n">1249000</td><td class="n">500000</td></tr>
<tr><td>유하은</td><td>인사팀</td><td class="n">2988000</td><td class="n">448200</td><td class="n">250000</td></tr>
<tr><td>임선호</td><td>생산팀</td><td class="n">3250000</td><td class="n">812500</td><td class="n">400000</td></tr>
<tr><td>이서현</td><td>경리팀</td><td class="n">2580000</td><td class="n">1290000</td><td class="n">500000</td></tr>
<tr><td>김준용</td><td>관리팀</td><td class="n">1200000</td><td class="n">180000</td><td class="n">250000</td></tr>
</table>
<div class="btn" style="left:619px;width:67px;border-color:#217346"></div>
<div class="a" style="left:668px;top:606px;width:1px;height:22px;background:#217346"></div>
<div class="t" style="left:634px;top:610px;font-size:12px;letter-spacing:-0.5px;color:#333">로드</div>
<svg style="left:674px;top:615px" width="6" height="3" viewBox="0 0 6 3"><path d="M0 0 H6 L3 3Z" fill="#555"/></svg>
<div class="btn" style="left:699px;width:76px">데이터 변환</div>
<div class="btn" style="left:788px;width:60px">취소</div>
</div>
</body></html>
